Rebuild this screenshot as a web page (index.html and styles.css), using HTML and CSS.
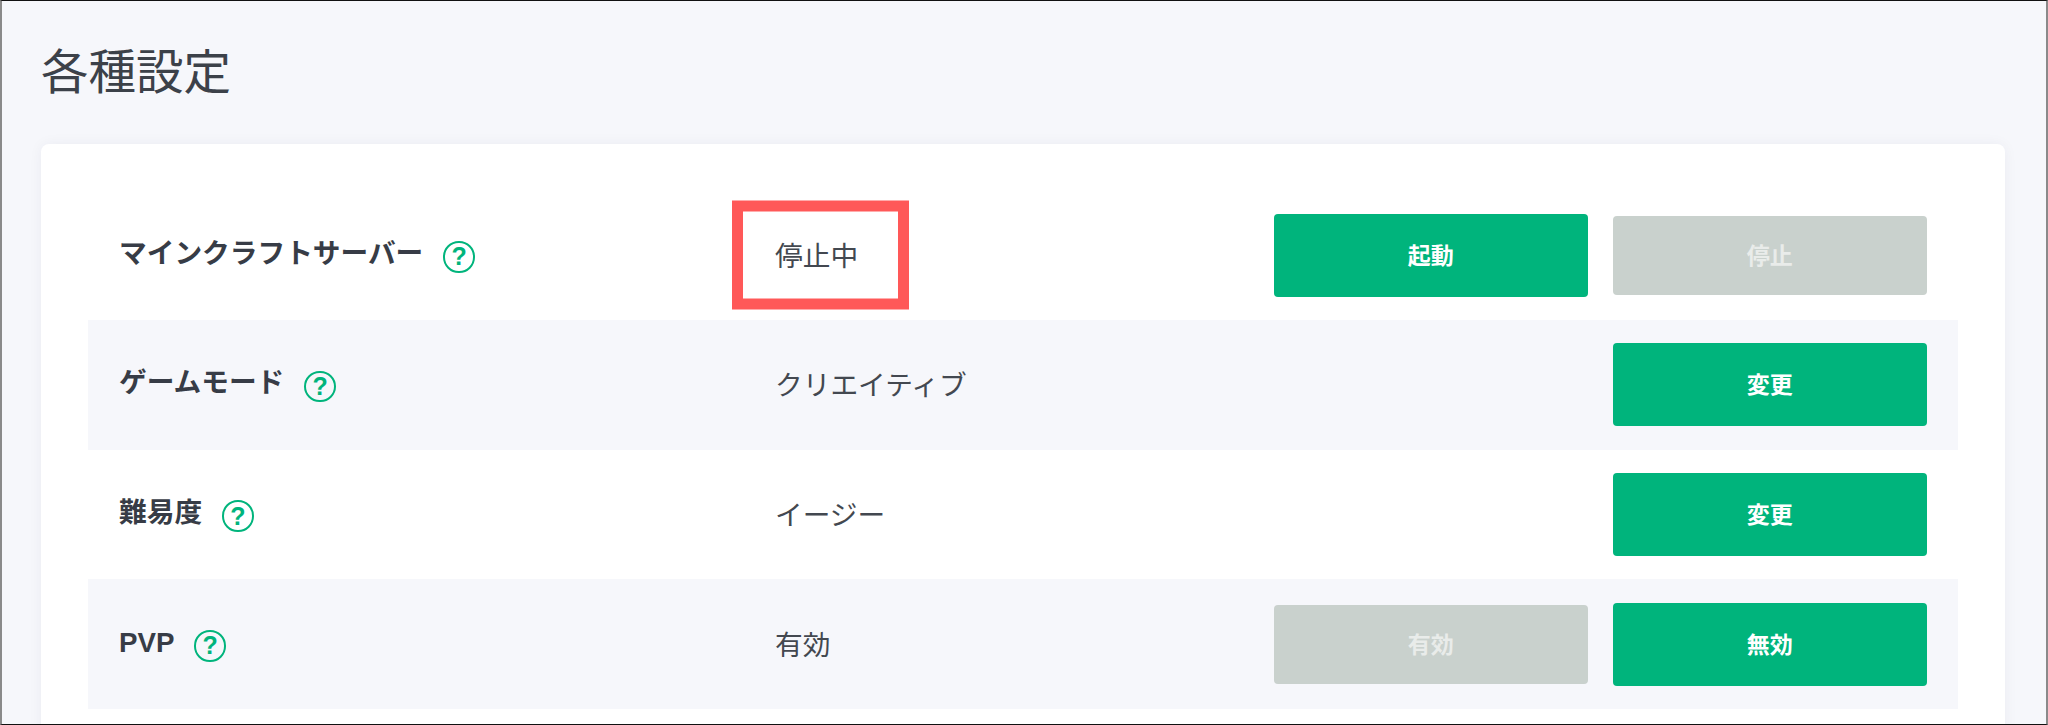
FILE: index.html
```html
<!DOCTYPE html>
<html lang="ja">
<head>
<meta charset="utf-8">
<title>各種設定</title>
<link rel="stylesheet" href="styles.css">
</head>
<body>
<main class="frame">
  <h1 class="title">各種設定</h1>
  <section class="card">
    <div class="row">
      <div class="label">マインクラフトサーバー<span class="help">?</span></div>
      <div class="value">停止中<span class="highlight"></span></div>
      <div class="actions">
        <button class="btn">起動</button>
        <button class="btn btn-off">停止</button>
      </div>
    </div>
    <div class="row row-alt">
      <div class="label">ゲームモード<span class="help">?</span></div>
      <div class="value">クリエイティブ</div>
      <div class="actions"><button class="btn">変更</button></div>
    </div>
    <div class="row">
      <div class="label">難易度<span class="help">?</span></div>
      <div class="value">イージー</div>
      <div class="actions"><button class="btn">変更</button></div>
    </div>
    <div class="row row-alt">
      <div class="label">PVP<span class="help">?</span></div>
      <div class="value">有効</div>
      <div class="actions">
        <button class="btn btn-off">有効</button>
        <button class="btn">無効</button>
      </div>
    </div>
  </section>
</main>
</body>
</html>
```
FILE: styles.css
```css
* { box-sizing: border-box; }
html, body { margin: 0; padding: 0; height: 725px; overflow: hidden; }
body {
  font-family: "Liberation Sans", "Noto Sans CJK JP", sans-serif;
  color: #3a3f47;
  background: #f6f7fb;
}
.frame {
  height: 725px;
  overflow: hidden;
  border-top: 1px solid #111;
  border-bottom: 1px solid #111;
  border-left: 2px solid #8a8a8a;
  border-right: 2px solid #8a8a8a;
  padding: 0 41px 0 39px;
}
.title {
  margin: 0;
  height: 142.5px;
  padding-top: 38px;
  font-size: 47.5px;
  line-height: 60px;
  font-weight: 400;
  font-family: "Noto Sans CJK JP", sans-serif;
  color: #3c4149;
}
.card {
  background: #fff;
  border-radius: 8px;
  padding: 47px 47px 60px;
  box-shadow: 0 0 14px rgba(30, 40, 70, 0.05);
}
.row {
  display: flex;
  align-items: center;
  height: 129.67px;
  padding: 0 31px;
}
.row-alt { background: #f6f7fb; }
.label {
  width: 656px;
  display: flex;
  align-items: center;
  padding-bottom: 3px;
  font-size: 27.7px;
  line-height: 40px;
  font-weight: 700;
  color: #373c46;
}
.help {
  width: 31.5px;
  height: 31.5px;
  margin-left: 20px;
  margin-top: 6px;
  border: 2px solid #00b47c;
  border-radius: 50%;
  display: flex;
  align-items: center;
  justify-content: center;
  font-family: "Liberation Sans", sans-serif;
  font-size: 25px;
  line-height: 1;
  font-weight: 700;
  color: #00b47c;
}
.value {
  position: relative;
  flex: 1;
  padding-bottom: 3px;
  font-size: 27.7px;
  color: #434850;
}
.highlight {
  position: absolute;
  left: -43px;
  top: 50%;
  width: 177px;
  height: 109px;
  transform: translateY(-50%);
  border: 11.5px solid #ff5858;
}
.actions {
  display: flex;
  justify-content: flex-end;
  align-items: center;
  gap: 24.5px;
}
.btn {
  width: 314.5px;
  height: 83px;
  border: 0;
  border-radius: 4px;
  background: #00b47c;
  color: #fff;
  font-family: "Noto Sans CJK JP", sans-serif;
  font-size: 23px;
  font-weight: 700;
  padding: 0 0 3px;
}
.btn-off {
  height: 79px;
  background: #c9d1cd;
  color: #e9ecea;
}
```
